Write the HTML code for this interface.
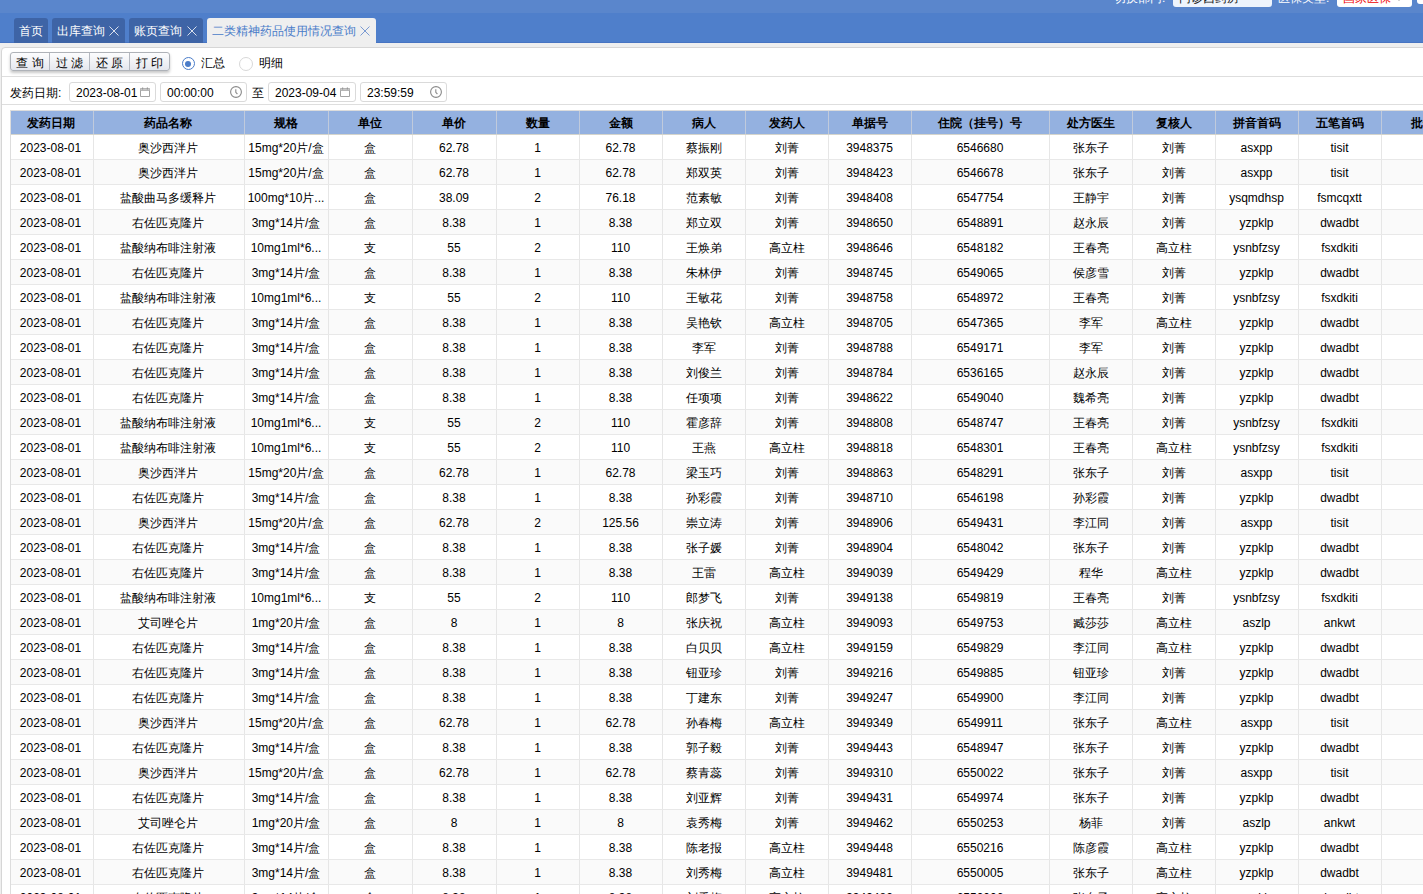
<!DOCTYPE html>
<html><head><meta charset="utf-8">
<style>
*{box-sizing:border-box}
html,body{margin:0;padding:0}
body{width:1423px;height:894px;overflow:hidden;background:#efefef;position:relative;font-family:"Liberation Sans",sans-serif;font-size:12px;color:#000}
.topband{position:absolute;left:0;top:0;width:1423px;height:13px;background:#5a86cc}
.tabbar{position:absolute;left:0;top:13px;width:1423px;height:30px;background:#4f7fcb;border-bottom:1px solid #4774c2}
.ctl{position:absolute;top:-10px;height:17px;line-height:17px;white-space:nowrap}
.lbl{color:#fff}
.inp{background:#eef4fc;border-radius:3px;color:#111;padding-left:6px}
.tab{position:absolute;top:18px;height:25px;line-height:25px;padding-top:1px;background:#3e64a6;color:#fff;border-radius:3px 3px 0 0;padding-left:5px;white-space:nowrap}
.tab.act{background:#efefef;color:#4a7cc9}
.x{position:absolute;top:8px;width:10px;height:10px}
.panel{position:absolute;left:1px;top:47px;width:1440px;height:900px;background:#fff;border:1px solid #d6d6d6;border-radius:4px}
.sep{position:absolute;left:2px;width:1430px;height:1px;background:#dedede}
.btns{position:absolute;left:10px;top:52px;height:19px;width:160px;border:1px solid #aeb2b8;border-radius:3px;box-shadow:0 2px 3px rgba(0,0,0,.22);background:linear-gradient(#fdfdfe,#e4e7ee);display:flex}
.btn{width:40px;height:17px;line-height:20px;text-align:center;border-right:1px solid #b4b8c0;color:#000}
.btn:last-child{border-right:none}
.radio{position:absolute;top:57px;width:13px;height:13px;border-radius:50%;border:1px solid #d0d0d0;background:#fff}
.radio.on{border-color:#4a7cc9}
.radio.on:after{content:"";position:absolute;left:2px;top:2.5px;width:6px;height:6px;border-radius:50%;background:#4a7cc9}
.rl{position:absolute;top:55px;line-height:16px}
.ic{position:absolute;top:4px;width:10px;height:10px}
.din{position:absolute;top:82px;height:20px;border:1px solid #dadada;border-radius:3px;background:#fff;line-height:20px;padding-left:6px;color:#000}
.tbl{position:absolute;left:10px;top:110px;width:1460px;border-left:1px solid #ddd;border-top:1px solid #dcdcdc}
.hr{display:flex;height:24px;background:#94b1e0;border-bottom:1px solid #d4d4cc}
.hr .c{border-right:1px solid #c0cadc;font-weight:bold;color:#000;line-height:24px}
.r{display:flex;height:25px;background:#fff;border-bottom:1px solid #e8e8e8}
.r .c{padding-top:1px}
.r.alt{background:#fafafa}
.c{flex:none;text-align:center;padding-right:1px;border-right:1px solid #e6e6e6;line-height:24px;white-space:nowrap;overflow:hidden;color:#000}
</style></head><body>
<div class="topband"></div>
<div class="tabbar"></div>
<div class="ctl lbl" style="left:1114px">切换部门:</div>
<div class="ctl inp" style="left:1173px;width:99px">门诊西药房</div>
<div class="ctl lbl" style="left:1278px">医保类型:</div>
<div class="ctl inp" style="left:1337px;width:75px;background:#fff;color:#e00">国家医保</div>
<div style="position:absolute;left:1396px;top:-2px;width:0;height:0;border-left:3px solid transparent;border-right:3px solid transparent;border-top:3px solid #aaa"></div>
<div class="ctl inp" style="left:1417px;width:20px;height:14px;background:#fff"></div>

<div class="tab" style="left:14px;width:34px">首页</div>
<div class="tab" style="left:52px;width:73px">出库查询<svg class="x" style="left:57px" viewBox="0 0 10 10"><path d="M0.5 0.5L9.5 9.5M9.5 0.5L0.5 9.5" stroke="#d8dfec" stroke-width="1"/></svg></div>
<div class="tab" style="left:129px;width:74px">账页查询<svg class="x" style="left:58px" viewBox="0 0 10 10"><path d="M0.5 0.5L9.5 9.5M9.5 0.5L0.5 9.5" stroke="#d8dfec" stroke-width="1"/></svg></div>
<div class="tab act" style="left:207px;width:169px">二类精神药品使用情况查询<svg class="x" style="left:153px" viewBox="0 0 10 10"><path d="M0.5 0.5L9.5 9.5M9.5 0.5L0.5 9.5" stroke="#7a9ad2" stroke-width="1"/></svg></div>

<div class="panel"></div>
<div class="btns"><div class="btn" style="width:39px">查 询</div><div class="btn">过 滤</div><div class="btn">还 原</div><div class="btn" style="width:39px">打 印</div></div>
<div class="radio on" style="left:182px"></div><div class="rl" style="left:201px">汇总</div>
<div class="radio" style="left:239px;width:14px;height:14px;border-color:#d8d8d8"></div><div class="rl" style="left:259px">明细</div>
<div class="sep" style="top:76px"></div>

<div class="rl" style="left:10px;top:85px">发药日期:</div>
<div class="din" style="left:69px;width:87px">2023-08-01<svg class="ic" style="left:70px" viewBox="0 0 10 10"><path d="M0.5 1.5H9.5V9.5H0.5Z M0.5 3.5H9.5" fill="none" stroke="#a3a3a3" stroke-width="1"/><rect x="0.5" y="1.5" width="9" height="2" fill="#c8c8c8"/><rect x="2" y="0.5" width="1.2" height="2" fill="#999"/><rect x="6.8" y="0.5" width="1.2" height="2" fill="#999"/></svg></div>
<div class="din" style="left:160px;width:87px">00:00:00<svg class="ic" style="left:69px;width:12px;height:12px;top:3px" viewBox="0 0 12 12"><circle cx="6" cy="6" r="5.4" fill="none" stroke="#8a8a8a" stroke-width="1.1"/><path d="M5.8 3.2V6.3L7.4 8" fill="none" stroke="#8a8a8a" stroke-width="1.1"/></svg></div>
<div class="rl" style="left:252px;top:85px">至</div>
<div class="din" style="left:268px;width:88px">2023-09-04<svg class="ic" style="left:71px" viewBox="0 0 10 10"><path d="M0.5 1.5H9.5V9.5H0.5Z M0.5 3.5H9.5" fill="none" stroke="#a3a3a3" stroke-width="1"/><rect x="0.5" y="1.5" width="9" height="2" fill="#c8c8c8"/><rect x="2" y="0.5" width="1.2" height="2" fill="#999"/><rect x="6.8" y="0.5" width="1.2" height="2" fill="#999"/></svg></div>
<div class="din" style="left:360px;width:87px">23:59:59<svg class="ic" style="left:69px;width:12px;height:12px;top:3px" viewBox="0 0 12 12"><circle cx="6" cy="6" r="5.4" fill="none" stroke="#8a8a8a" stroke-width="1.1"/><path d="M5.8 3.2V6.3L7.4 8" fill="none" stroke="#8a8a8a" stroke-width="1.1"/></svg></div>
<div class="sep" style="top:104px"></div>

<div class="tbl">
<div class="hr"><div class="c" style="width:83px;padding-right:3px">发药日期</div><div class="c" style="width:151px;padding-right:3px">药品名称</div><div class="c" style="width:84px">规格</div><div class="c" style="width:84px">单位</div><div class="c" style="width:84px">单价</div><div class="c" style="width:83px">数量</div><div class="c" style="width:83px">金额</div><div class="c" style="width:83px">病人</div><div class="c" style="width:83px">发药人</div><div class="c" style="width:83px">单据号</div><div class="c" style="width:138px">住院（挂号）号</div><div class="c" style="width:83px">处方医生</div><div class="c" style="width:83px">复核人</div><div class="c" style="width:83px">拼音首码</div><div class="c" style="width:83px">五笔首码</div><div class="c" style="width:83px">批号</div></div>
<div class="r"><div class="c" style="width:83px;padding-right:3px">2023-08-01</div><div class="c" style="width:151px;padding-right:3px">奥沙西泮片</div><div class="c" style="width:84px">15mg*20片/盒</div><div class="c" style="width:84px">盒</div><div class="c" style="width:84px">62.78</div><div class="c" style="width:83px">1</div><div class="c" style="width:83px">62.78</div><div class="c" style="width:83px">蔡振刚</div><div class="c" style="width:83px">刘菁</div><div class="c" style="width:83px">3948375</div><div class="c" style="width:138px">6546680</div><div class="c" style="width:83px">张东子</div><div class="c" style="width:83px">刘菁</div><div class="c" style="width:83px">asxpp</div><div class="c" style="width:83px">tisit</div><div class="c" style="width:83px"></div></div>
<div class="r alt"><div class="c" style="width:83px;padding-right:3px">2023-08-01</div><div class="c" style="width:151px;padding-right:3px">奥沙西泮片</div><div class="c" style="width:84px">15mg*20片/盒</div><div class="c" style="width:84px">盒</div><div class="c" style="width:84px">62.78</div><div class="c" style="width:83px">1</div><div class="c" style="width:83px">62.78</div><div class="c" style="width:83px">郑双英</div><div class="c" style="width:83px">刘菁</div><div class="c" style="width:83px">3948423</div><div class="c" style="width:138px">6546678</div><div class="c" style="width:83px">张东子</div><div class="c" style="width:83px">刘菁</div><div class="c" style="width:83px">asxpp</div><div class="c" style="width:83px">tisit</div><div class="c" style="width:83px"></div></div>
<div class="r"><div class="c" style="width:83px;padding-right:3px">2023-08-01</div><div class="c" style="width:151px;padding-right:3px">盐酸曲马多缓释片</div><div class="c" style="width:84px">100mg*10片...</div><div class="c" style="width:84px">盒</div><div class="c" style="width:84px">38.09</div><div class="c" style="width:83px">2</div><div class="c" style="width:83px">76.18</div><div class="c" style="width:83px">范素敏</div><div class="c" style="width:83px">刘菁</div><div class="c" style="width:83px">3948408</div><div class="c" style="width:138px">6547754</div><div class="c" style="width:83px">王静宇</div><div class="c" style="width:83px">刘菁</div><div class="c" style="width:83px">ysqmdhsp</div><div class="c" style="width:83px">fsmcqxtt</div><div class="c" style="width:83px"></div></div>
<div class="r alt"><div class="c" style="width:83px;padding-right:3px">2023-08-01</div><div class="c" style="width:151px;padding-right:3px">右佐匹克隆片</div><div class="c" style="width:84px">3mg*14片/盒</div><div class="c" style="width:84px">盒</div><div class="c" style="width:84px">8.38</div><div class="c" style="width:83px">1</div><div class="c" style="width:83px">8.38</div><div class="c" style="width:83px">郑立双</div><div class="c" style="width:83px">刘菁</div><div class="c" style="width:83px">3948650</div><div class="c" style="width:138px">6548891</div><div class="c" style="width:83px">赵永辰</div><div class="c" style="width:83px">刘菁</div><div class="c" style="width:83px">yzpklp</div><div class="c" style="width:83px">dwadbt</div><div class="c" style="width:83px"></div></div>
<div class="r"><div class="c" style="width:83px;padding-right:3px">2023-08-01</div><div class="c" style="width:151px;padding-right:3px">盐酸纳布啡注射液</div><div class="c" style="width:84px">10mg1ml*6...</div><div class="c" style="width:84px">支</div><div class="c" style="width:84px">55</div><div class="c" style="width:83px">2</div><div class="c" style="width:83px">110</div><div class="c" style="width:83px">王焕弟</div><div class="c" style="width:83px">高立柱</div><div class="c" style="width:83px">3948646</div><div class="c" style="width:138px">6548182</div><div class="c" style="width:83px">王春亮</div><div class="c" style="width:83px">高立柱</div><div class="c" style="width:83px">ysnbfzsy</div><div class="c" style="width:83px">fsxdkiti</div><div class="c" style="width:83px"></div></div>
<div class="r alt"><div class="c" style="width:83px;padding-right:3px">2023-08-01</div><div class="c" style="width:151px;padding-right:3px">右佐匹克隆片</div><div class="c" style="width:84px">3mg*14片/盒</div><div class="c" style="width:84px">盒</div><div class="c" style="width:84px">8.38</div><div class="c" style="width:83px">1</div><div class="c" style="width:83px">8.38</div><div class="c" style="width:83px">朱林伊</div><div class="c" style="width:83px">刘菁</div><div class="c" style="width:83px">3948745</div><div class="c" style="width:138px">6549065</div><div class="c" style="width:83px">侯彦雪</div><div class="c" style="width:83px">刘菁</div><div class="c" style="width:83px">yzpklp</div><div class="c" style="width:83px">dwadbt</div><div class="c" style="width:83px"></div></div>
<div class="r"><div class="c" style="width:83px;padding-right:3px">2023-08-01</div><div class="c" style="width:151px;padding-right:3px">盐酸纳布啡注射液</div><div class="c" style="width:84px">10mg1ml*6...</div><div class="c" style="width:84px">支</div><div class="c" style="width:84px">55</div><div class="c" style="width:83px">2</div><div class="c" style="width:83px">110</div><div class="c" style="width:83px">王敏花</div><div class="c" style="width:83px">刘菁</div><div class="c" style="width:83px">3948758</div><div class="c" style="width:138px">6548972</div><div class="c" style="width:83px">王春亮</div><div class="c" style="width:83px">刘菁</div><div class="c" style="width:83px">ysnbfzsy</div><div class="c" style="width:83px">fsxdkiti</div><div class="c" style="width:83px"></div></div>
<div class="r alt"><div class="c" style="width:83px;padding-right:3px">2023-08-01</div><div class="c" style="width:151px;padding-right:3px">右佐匹克隆片</div><div class="c" style="width:84px">3mg*14片/盒</div><div class="c" style="width:84px">盒</div><div class="c" style="width:84px">8.38</div><div class="c" style="width:83px">1</div><div class="c" style="width:83px">8.38</div><div class="c" style="width:83px">吴艳钦</div><div class="c" style="width:83px">高立柱</div><div class="c" style="width:83px">3948705</div><div class="c" style="width:138px">6547365</div><div class="c" style="width:83px">李军</div><div class="c" style="width:83px">高立柱</div><div class="c" style="width:83px">yzpklp</div><div class="c" style="width:83px">dwadbt</div><div class="c" style="width:83px"></div></div>
<div class="r"><div class="c" style="width:83px;padding-right:3px">2023-08-01</div><div class="c" style="width:151px;padding-right:3px">右佐匹克隆片</div><div class="c" style="width:84px">3mg*14片/盒</div><div class="c" style="width:84px">盒</div><div class="c" style="width:84px">8.38</div><div class="c" style="width:83px">1</div><div class="c" style="width:83px">8.38</div><div class="c" style="width:83px">李军</div><div class="c" style="width:83px">刘菁</div><div class="c" style="width:83px">3948788</div><div class="c" style="width:138px">6549171</div><div class="c" style="width:83px">李军</div><div class="c" style="width:83px">刘菁</div><div class="c" style="width:83px">yzpklp</div><div class="c" style="width:83px">dwadbt</div><div class="c" style="width:83px"></div></div>
<div class="r alt"><div class="c" style="width:83px;padding-right:3px">2023-08-01</div><div class="c" style="width:151px;padding-right:3px">右佐匹克隆片</div><div class="c" style="width:84px">3mg*14片/盒</div><div class="c" style="width:84px">盒</div><div class="c" style="width:84px">8.38</div><div class="c" style="width:83px">1</div><div class="c" style="width:83px">8.38</div><div class="c" style="width:83px">刘俊兰</div><div class="c" style="width:83px">刘菁</div><div class="c" style="width:83px">3948784</div><div class="c" style="width:138px">6536165</div><div class="c" style="width:83px">赵永辰</div><div class="c" style="width:83px">刘菁</div><div class="c" style="width:83px">yzpklp</div><div class="c" style="width:83px">dwadbt</div><div class="c" style="width:83px"></div></div>
<div class="r"><div class="c" style="width:83px;padding-right:3px">2023-08-01</div><div class="c" style="width:151px;padding-right:3px">右佐匹克隆片</div><div class="c" style="width:84px">3mg*14片/盒</div><div class="c" style="width:84px">盒</div><div class="c" style="width:84px">8.38</div><div class="c" style="width:83px">1</div><div class="c" style="width:83px">8.38</div><div class="c" style="width:83px">任项项</div><div class="c" style="width:83px">刘菁</div><div class="c" style="width:83px">3948622</div><div class="c" style="width:138px">6549040</div><div class="c" style="width:83px">魏希亮</div><div class="c" style="width:83px">刘菁</div><div class="c" style="width:83px">yzpklp</div><div class="c" style="width:83px">dwadbt</div><div class="c" style="width:83px"></div></div>
<div class="r alt"><div class="c" style="width:83px;padding-right:3px">2023-08-01</div><div class="c" style="width:151px;padding-right:3px">盐酸纳布啡注射液</div><div class="c" style="width:84px">10mg1ml*6...</div><div class="c" style="width:84px">支</div><div class="c" style="width:84px">55</div><div class="c" style="width:83px">2</div><div class="c" style="width:83px">110</div><div class="c" style="width:83px">霍彦辞</div><div class="c" style="width:83px">刘菁</div><div class="c" style="width:83px">3948808</div><div class="c" style="width:138px">6548747</div><div class="c" style="width:83px">王春亮</div><div class="c" style="width:83px">刘菁</div><div class="c" style="width:83px">ysnbfzsy</div><div class="c" style="width:83px">fsxdkiti</div><div class="c" style="width:83px"></div></div>
<div class="r"><div class="c" style="width:83px;padding-right:3px">2023-08-01</div><div class="c" style="width:151px;padding-right:3px">盐酸纳布啡注射液</div><div class="c" style="width:84px">10mg1ml*6...</div><div class="c" style="width:84px">支</div><div class="c" style="width:84px">55</div><div class="c" style="width:83px">2</div><div class="c" style="width:83px">110</div><div class="c" style="width:83px">王燕</div><div class="c" style="width:83px">高立柱</div><div class="c" style="width:83px">3948818</div><div class="c" style="width:138px">6548301</div><div class="c" style="width:83px">王春亮</div><div class="c" style="width:83px">高立柱</div><div class="c" style="width:83px">ysnbfzsy</div><div class="c" style="width:83px">fsxdkiti</div><div class="c" style="width:83px"></div></div>
<div class="r alt"><div class="c" style="width:83px;padding-right:3px">2023-08-01</div><div class="c" style="width:151px;padding-right:3px">奥沙西泮片</div><div class="c" style="width:84px">15mg*20片/盒</div><div class="c" style="width:84px">盒</div><div class="c" style="width:84px">62.78</div><div class="c" style="width:83px">1</div><div class="c" style="width:83px">62.78</div><div class="c" style="width:83px">梁玉巧</div><div class="c" style="width:83px">刘菁</div><div class="c" style="width:83px">3948863</div><div class="c" style="width:138px">6548291</div><div class="c" style="width:83px">张东子</div><div class="c" style="width:83px">刘菁</div><div class="c" style="width:83px">asxpp</div><div class="c" style="width:83px">tisit</div><div class="c" style="width:83px"></div></div>
<div class="r"><div class="c" style="width:83px;padding-right:3px">2023-08-01</div><div class="c" style="width:151px;padding-right:3px">右佐匹克隆片</div><div class="c" style="width:84px">3mg*14片/盒</div><div class="c" style="width:84px">盒</div><div class="c" style="width:84px">8.38</div><div class="c" style="width:83px">1</div><div class="c" style="width:83px">8.38</div><div class="c" style="width:83px">孙彩霞</div><div class="c" style="width:83px">刘菁</div><div class="c" style="width:83px">3948710</div><div class="c" style="width:138px">6546198</div><div class="c" style="width:83px">孙彩霞</div><div class="c" style="width:83px">刘菁</div><div class="c" style="width:83px">yzpklp</div><div class="c" style="width:83px">dwadbt</div><div class="c" style="width:83px"></div></div>
<div class="r alt"><div class="c" style="width:83px;padding-right:3px">2023-08-01</div><div class="c" style="width:151px;padding-right:3px">奥沙西泮片</div><div class="c" style="width:84px">15mg*20片/盒</div><div class="c" style="width:84px">盒</div><div class="c" style="width:84px">62.78</div><div class="c" style="width:83px">2</div><div class="c" style="width:83px">125.56</div><div class="c" style="width:83px">崇立涛</div><div class="c" style="width:83px">刘菁</div><div class="c" style="width:83px">3948906</div><div class="c" style="width:138px">6549431</div><div class="c" style="width:83px">李江同</div><div class="c" style="width:83px">刘菁</div><div class="c" style="width:83px">asxpp</div><div class="c" style="width:83px">tisit</div><div class="c" style="width:83px"></div></div>
<div class="r"><div class="c" style="width:83px;padding-right:3px">2023-08-01</div><div class="c" style="width:151px;padding-right:3px">右佐匹克隆片</div><div class="c" style="width:84px">3mg*14片/盒</div><div class="c" style="width:84px">盒</div><div class="c" style="width:84px">8.38</div><div class="c" style="width:83px">1</div><div class="c" style="width:83px">8.38</div><div class="c" style="width:83px">张子媛</div><div class="c" style="width:83px">刘菁</div><div class="c" style="width:83px">3948904</div><div class="c" style="width:138px">6548042</div><div class="c" style="width:83px">张东子</div><div class="c" style="width:83px">刘菁</div><div class="c" style="width:83px">yzpklp</div><div class="c" style="width:83px">dwadbt</div><div class="c" style="width:83px"></div></div>
<div class="r alt"><div class="c" style="width:83px;padding-right:3px">2023-08-01</div><div class="c" style="width:151px;padding-right:3px">右佐匹克隆片</div><div class="c" style="width:84px">3mg*14片/盒</div><div class="c" style="width:84px">盒</div><div class="c" style="width:84px">8.38</div><div class="c" style="width:83px">1</div><div class="c" style="width:83px">8.38</div><div class="c" style="width:83px">王雷</div><div class="c" style="width:83px">高立柱</div><div class="c" style="width:83px">3949039</div><div class="c" style="width:138px">6549429</div><div class="c" style="width:83px">程华</div><div class="c" style="width:83px">高立柱</div><div class="c" style="width:83px">yzpklp</div><div class="c" style="width:83px">dwadbt</div><div class="c" style="width:83px"></div></div>
<div class="r"><div class="c" style="width:83px;padding-right:3px">2023-08-01</div><div class="c" style="width:151px;padding-right:3px">盐酸纳布啡注射液</div><div class="c" style="width:84px">10mg1ml*6...</div><div class="c" style="width:84px">支</div><div class="c" style="width:84px">55</div><div class="c" style="width:83px">2</div><div class="c" style="width:83px">110</div><div class="c" style="width:83px">郎梦飞</div><div class="c" style="width:83px">刘菁</div><div class="c" style="width:83px">3949138</div><div class="c" style="width:138px">6549819</div><div class="c" style="width:83px">王春亮</div><div class="c" style="width:83px">刘菁</div><div class="c" style="width:83px">ysnbfzsy</div><div class="c" style="width:83px">fsxdkiti</div><div class="c" style="width:83px"></div></div>
<div class="r alt"><div class="c" style="width:83px;padding-right:3px">2023-08-01</div><div class="c" style="width:151px;padding-right:3px">艾司唑仑片</div><div class="c" style="width:84px">1mg*20片/盒</div><div class="c" style="width:84px">盒</div><div class="c" style="width:84px">8</div><div class="c" style="width:83px">1</div><div class="c" style="width:83px">8</div><div class="c" style="width:83px">张庆祝</div><div class="c" style="width:83px">高立柱</div><div class="c" style="width:83px">3949093</div><div class="c" style="width:138px">6549753</div><div class="c" style="width:83px">臧莎莎</div><div class="c" style="width:83px">高立柱</div><div class="c" style="width:83px">aszlp</div><div class="c" style="width:83px">ankwt</div><div class="c" style="width:83px"></div></div>
<div class="r"><div class="c" style="width:83px;padding-right:3px">2023-08-01</div><div class="c" style="width:151px;padding-right:3px">右佐匹克隆片</div><div class="c" style="width:84px">3mg*14片/盒</div><div class="c" style="width:84px">盒</div><div class="c" style="width:84px">8.38</div><div class="c" style="width:83px">1</div><div class="c" style="width:83px">8.38</div><div class="c" style="width:83px">白贝贝</div><div class="c" style="width:83px">高立柱</div><div class="c" style="width:83px">3949159</div><div class="c" style="width:138px">6549829</div><div class="c" style="width:83px">李江同</div><div class="c" style="width:83px">高立柱</div><div class="c" style="width:83px">yzpklp</div><div class="c" style="width:83px">dwadbt</div><div class="c" style="width:83px"></div></div>
<div class="r alt"><div class="c" style="width:83px;padding-right:3px">2023-08-01</div><div class="c" style="width:151px;padding-right:3px">右佐匹克隆片</div><div class="c" style="width:84px">3mg*14片/盒</div><div class="c" style="width:84px">盒</div><div class="c" style="width:84px">8.38</div><div class="c" style="width:83px">1</div><div class="c" style="width:83px">8.38</div><div class="c" style="width:83px">钮亚珍</div><div class="c" style="width:83px">刘菁</div><div class="c" style="width:83px">3949216</div><div class="c" style="width:138px">6549885</div><div class="c" style="width:83px">钮亚珍</div><div class="c" style="width:83px">刘菁</div><div class="c" style="width:83px">yzpklp</div><div class="c" style="width:83px">dwadbt</div><div class="c" style="width:83px"></div></div>
<div class="r"><div class="c" style="width:83px;padding-right:3px">2023-08-01</div><div class="c" style="width:151px;padding-right:3px">右佐匹克隆片</div><div class="c" style="width:84px">3mg*14片/盒</div><div class="c" style="width:84px">盒</div><div class="c" style="width:84px">8.38</div><div class="c" style="width:83px">1</div><div class="c" style="width:83px">8.38</div><div class="c" style="width:83px">丁建东</div><div class="c" style="width:83px">刘菁</div><div class="c" style="width:83px">3949247</div><div class="c" style="width:138px">6549900</div><div class="c" style="width:83px">李江同</div><div class="c" style="width:83px">刘菁</div><div class="c" style="width:83px">yzpklp</div><div class="c" style="width:83px">dwadbt</div><div class="c" style="width:83px"></div></div>
<div class="r alt"><div class="c" style="width:83px;padding-right:3px">2023-08-01</div><div class="c" style="width:151px;padding-right:3px">奥沙西泮片</div><div class="c" style="width:84px">15mg*20片/盒</div><div class="c" style="width:84px">盒</div><div class="c" style="width:84px">62.78</div><div class="c" style="width:83px">1</div><div class="c" style="width:83px">62.78</div><div class="c" style="width:83px">孙春梅</div><div class="c" style="width:83px">高立柱</div><div class="c" style="width:83px">3949349</div><div class="c" style="width:138px">6549911</div><div class="c" style="width:83px">张东子</div><div class="c" style="width:83px">高立柱</div><div class="c" style="width:83px">asxpp</div><div class="c" style="width:83px">tisit</div><div class="c" style="width:83px"></div></div>
<div class="r"><div class="c" style="width:83px;padding-right:3px">2023-08-01</div><div class="c" style="width:151px;padding-right:3px">右佐匹克隆片</div><div class="c" style="width:84px">3mg*14片/盒</div><div class="c" style="width:84px">盒</div><div class="c" style="width:84px">8.38</div><div class="c" style="width:83px">1</div><div class="c" style="width:83px">8.38</div><div class="c" style="width:83px">郭子毅</div><div class="c" style="width:83px">刘菁</div><div class="c" style="width:83px">3949443</div><div class="c" style="width:138px">6548947</div><div class="c" style="width:83px">张东子</div><div class="c" style="width:83px">刘菁</div><div class="c" style="width:83px">yzpklp</div><div class="c" style="width:83px">dwadbt</div><div class="c" style="width:83px"></div></div>
<div class="r alt"><div class="c" style="width:83px;padding-right:3px">2023-08-01</div><div class="c" style="width:151px;padding-right:3px">奥沙西泮片</div><div class="c" style="width:84px">15mg*20片/盒</div><div class="c" style="width:84px">盒</div><div class="c" style="width:84px">62.78</div><div class="c" style="width:83px">1</div><div class="c" style="width:83px">62.78</div><div class="c" style="width:83px">蔡青蕊</div><div class="c" style="width:83px">刘菁</div><div class="c" style="width:83px">3949310</div><div class="c" style="width:138px">6550022</div><div class="c" style="width:83px">张东子</div><div class="c" style="width:83px">刘菁</div><div class="c" style="width:83px">asxpp</div><div class="c" style="width:83px">tisit</div><div class="c" style="width:83px"></div></div>
<div class="r"><div class="c" style="width:83px;padding-right:3px">2023-08-01</div><div class="c" style="width:151px;padding-right:3px">右佐匹克隆片</div><div class="c" style="width:84px">3mg*14片/盒</div><div class="c" style="width:84px">盒</div><div class="c" style="width:84px">8.38</div><div class="c" style="width:83px">1</div><div class="c" style="width:83px">8.38</div><div class="c" style="width:83px">刘亚辉</div><div class="c" style="width:83px">刘菁</div><div class="c" style="width:83px">3949431</div><div class="c" style="width:138px">6549974</div><div class="c" style="width:83px">张东子</div><div class="c" style="width:83px">刘菁</div><div class="c" style="width:83px">yzpklp</div><div class="c" style="width:83px">dwadbt</div><div class="c" style="width:83px"></div></div>
<div class="r alt"><div class="c" style="width:83px;padding-right:3px">2023-08-01</div><div class="c" style="width:151px;padding-right:3px">艾司唑仑片</div><div class="c" style="width:84px">1mg*20片/盒</div><div class="c" style="width:84px">盒</div><div class="c" style="width:84px">8</div><div class="c" style="width:83px">1</div><div class="c" style="width:83px">8</div><div class="c" style="width:83px">袁秀梅</div><div class="c" style="width:83px">刘菁</div><div class="c" style="width:83px">3949462</div><div class="c" style="width:138px">6550253</div><div class="c" style="width:83px">杨菲</div><div class="c" style="width:83px">刘菁</div><div class="c" style="width:83px">aszlp</div><div class="c" style="width:83px">ankwt</div><div class="c" style="width:83px"></div></div>
<div class="r"><div class="c" style="width:83px;padding-right:3px">2023-08-01</div><div class="c" style="width:151px;padding-right:3px">右佐匹克隆片</div><div class="c" style="width:84px">3mg*14片/盒</div><div class="c" style="width:84px">盒</div><div class="c" style="width:84px">8.38</div><div class="c" style="width:83px">1</div><div class="c" style="width:83px">8.38</div><div class="c" style="width:83px">陈老报</div><div class="c" style="width:83px">高立柱</div><div class="c" style="width:83px">3949448</div><div class="c" style="width:138px">6550216</div><div class="c" style="width:83px">陈彦霞</div><div class="c" style="width:83px">高立柱</div><div class="c" style="width:83px">yzpklp</div><div class="c" style="width:83px">dwadbt</div><div class="c" style="width:83px"></div></div>
<div class="r alt"><div class="c" style="width:83px;padding-right:3px">2023-08-01</div><div class="c" style="width:151px;padding-right:3px">右佐匹克隆片</div><div class="c" style="width:84px">3mg*14片/盒</div><div class="c" style="width:84px">盒</div><div class="c" style="width:84px">8.38</div><div class="c" style="width:83px">1</div><div class="c" style="width:83px">8.38</div><div class="c" style="width:83px">刘秀梅</div><div class="c" style="width:83px">高立柱</div><div class="c" style="width:83px">3949481</div><div class="c" style="width:138px">6550005</div><div class="c" style="width:83px">张东子</div><div class="c" style="width:83px">高立柱</div><div class="c" style="width:83px">yzpklp</div><div class="c" style="width:83px">dwadbt</div><div class="c" style="width:83px"></div></div>
<div class="r"><div class="c" style="width:83px;padding-right:3px">2023-08-01</div><div class="c" style="width:151px;padding-right:3px">右佐匹克隆片</div><div class="c" style="width:84px">3mg*14片/盒</div><div class="c" style="width:84px">盒</div><div class="c" style="width:84px">8.38</div><div class="c" style="width:83px">1</div><div class="c" style="width:83px">8.38</div><div class="c" style="width:83px">刘秀梅</div><div class="c" style="width:83px">高立柱</div><div class="c" style="width:83px">3949482</div><div class="c" style="width:138px">6550006</div><div class="c" style="width:83px">张东子</div><div class="c" style="width:83px">高立柱</div><div class="c" style="width:83px">yzpklp</div><div class="c" style="width:83px">dwadbt</div><div class="c" style="width:83px"></div></div>
</div>
</body></html>
